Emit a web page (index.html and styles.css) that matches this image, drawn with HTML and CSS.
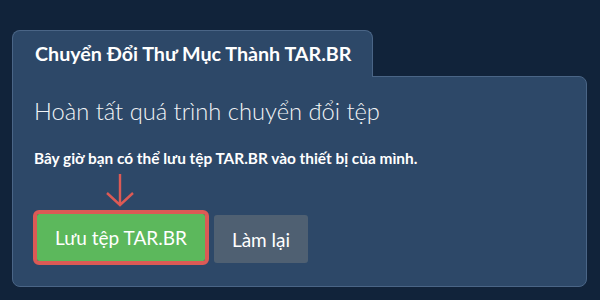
FILE: index.html
```html
<!DOCTYPE html>
<html lang="vi">
<head>
<meta charset="utf-8">
<link rel="stylesheet" href="styles.css">
</head>
<body>
<div class="wrap">
  <div class="tab">Chuyển Đổi Thư Mục Thành TAR.BR</div>
  <div class="panel">
    <h2 class="heading">Hoàn tất quá trình chuyển đổi tệp</h2>
    <p class="note">Bây giờ bạn có thể lưu tệp TAR.BR vào thiết bị của mình.</p>
    <div class="actions">
      <div class="save-wrap">
        <svg class="arrow" width="30" height="34" viewBox="0 0 30 34" aria-hidden="true">
          <path d="M15 1 V32 M2 20 L15 32 L28 20" fill="none" stroke="#dc5a55" stroke-width="2.4"/>
        </svg>
        <button class="btn btn-save">Lưu tệp TAR.BR</button>
      </div>
      <button class="btn btn-redo">Làm lại</button>
    </div>
  </div>
</div>
</body>
</html>
```

FILE: styles.css
```css
html, body {
  margin: 0;
  padding: 0;
  background: #11233a;
  width: 600px;
  height: 300px;
  overflow: hidden;
  font-family: Lato, "Noto Sans", sans-serif;
  color: #ffffff;
}

.wrap {
  padding: 30px 13px 0 12px;
}

.tab {
  display: inline-block;
  box-sizing: border-box;
  height: 47px;
  width: 361px;
  padding: 11px 0 0 22px;
  font-size: 19.7px;
  font-weight: 700;
  line-height: 24px;
  background: #2d4868;
  border: 1px solid #4a6586;
  border-bottom: none;
  border-radius: 8px 8px 0 0;
  position: relative;
  z-index: 1;
  margin-bottom: -1px;
}

.panel {
  box-sizing: border-box;
  height: 211px;
  background: #2d4868;
  border: 1px solid #4a6586;
  border-radius: 0 8px 8px 8px;
  padding: 20px 20px 0 21px;
}

.heading {
  margin: 0;
  font-size: 23.7px;
  font-weight: 300;
  line-height: 29px;
  color: #f2f4f6;
}

.note {
  margin: 23px 0 0 0;
  font-size: 15.4px;
  font-weight: 700;
  line-height: 18px;
}

.actions {
  display: flex;
  align-items: flex-start;
  gap: 9px;
  margin: 47px 0 0 3px;
}

.save-wrap {
  position: relative;
}

.arrow {
  position: absolute;
  left: 68px;
  top: -41px;
}

.btn {
  font-family: Lato, "Noto Sans", sans-serif;
  font-size: 19px;
  font-weight: 400;
  color: #ffffff;
  border: none;
  border-radius: 3px;
  height: 47px;
  padding: 0;
  margin: 0;
  line-height: 47px;
  text-align: center;
}

.btn-save {
  width: 168px;
  background: #5cb85c;
  outline: 4px solid #dc5a55;
  border-radius: 2px;
}

.btn-redo {
  width: 94px;
  height: 48px;
  background: #4f6072;
  margin-top: 1px;
}
```
